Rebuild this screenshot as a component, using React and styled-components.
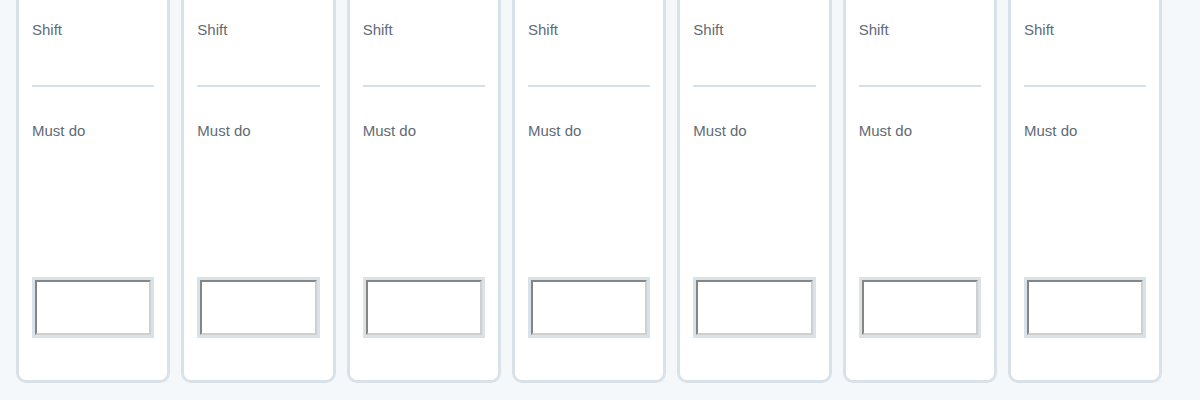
import React from "react";
import styled, { createGlobalStyle } from "styled-components";

const GlobalStyle = createGlobalStyle`
  html, body {
    margin: 0;
    padding: 0;
    background: #f5f8fa;
    overflow: hidden;
  }
  body {
    font-family: "Liberation Sans", Arial, Helvetica, sans-serif;
  }
`;

const Week = styled.div`
  display: grid;
  grid-template-columns: repeat(7, 154.33px);
  column-gap: 11px;
  padding-left: 16px;
  margin-top: -40px;
`;

const DayCard = styled.section`
  box-sizing: border-box;
  height: 423px;
  display: flex;
  flex-direction: column;
  background: #ffffff;
  border: 3px solid #d9e2e8;
  border-radius: 10px;
  padding: 58px 13px 42px;
`;

const FieldLabel = styled.div`
  font-size: 15px;
  line-height: 18px;
  color: #5f6b76;
  margin-top: ${(p) => p.$offset || 0}px;
`;

const Divider = styled.div`
  height: 2px;
  margin-top: 46px;
  background: #d6dfe6;
`;

const InputFrame = styled.div`
  box-sizing: border-box;
  margin-top: auto;
  height: 61px;
  border: 3px solid #d9e2e8;
`;

const TaskInput = styled.input`
  display: block;
  box-sizing: border-box;
  width: 100%;
  height: 100%;
  margin: 0;
  padding: 2px 4px;
  background: #ffffff;
  border-width: 2px;
  border-style: solid;
  border-color: #858585 #cfcfcf #cfcfcf #858585;
  font: 14px "Liberation Sans", Arial, sans-serif;
  outline: none;
`;

const days = ["mon", "tue", "wed", "thu", "fri", "sat", "sun"];

export default function App() {
  return (
    <>
      <GlobalStyle />
      <Week>
        {days.map((d) => (
          <DayCard key={d}>
            <FieldLabel>Shift</FieldLabel>
            <Divider />
            <FieldLabel $offset={35}>Must do</FieldLabel>
            <InputFrame>
              <TaskInput type="text" aria-label={`${d} task`} />
            </InputFrame>
          </DayCard>
        ))}
      </Week>
    </>
  );
}
